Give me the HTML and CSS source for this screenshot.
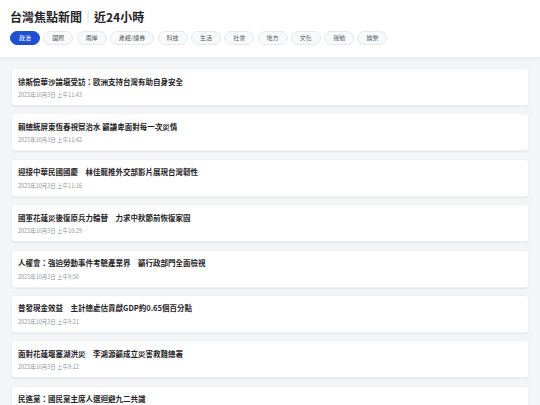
FILE: index.html
```html
<!DOCTYPE html>
<html lang="zh-Hant">
<head>
<meta charset="utf-8">
<link rel="stylesheet" href="styles.css">
</head>
<body>
<header class="header">
  <h1 class="title">台灣焦點新聞<span class="sep">｜</span>近24小時</h1>
  <nav class="chips">
    <span class="chip active">政治</span>
    <span class="chip">國際</span>
    <span class="chip">兩岸</span>
    <span class="chip">產經/證券</span>
    <span class="chip">科技</span>
    <span class="chip">生活</span>
    <span class="chip">社會</span>
    <span class="chip">地方</span>
    <span class="chip">文化</span>
    <span class="chip">運動</span>
    <span class="chip">娛樂</span>
  </nav>
</header>
<main class="list">
  <article class="card"><div class="card-title">徐斯儉華沙論壇受訪：歐洲支持台灣有助自身安全</div><div class="card-date">2025年10月3日 上午11:43</div></article>
  <article class="card"><div class="card-title">賴總統屏東恆春視察治水 籲謙卑面對每一次災情</div><div class="card-date">2025年10月3日 上午11:42</div></article>
  <article class="card"><div class="card-title">迎接中華民國國慶　林佳龍推外交部影片展現台灣韌性</div><div class="card-date">2025年10月3日 上午11:16</div></article>
  <article class="card"><div class="card-title">國軍花蓮災後復原兵力輪替　力求中秋節前恢復家園</div><div class="card-date">2025年10月3日 上午10:29</div></article>
  <article class="card"><div class="card-title">人權會：強迫勞動事件考驗產業界　籲行政部門全面檢視</div><div class="card-date">2025年10月3日 上午9:50</div></article>
  <article class="card"><div class="card-title">普發現金效益　主計總處估貢獻GDP約0.65個百分點</div><div class="card-date">2025年10月3日 上午9:21</div></article>
  <article class="card"><div class="card-title">面對花蓮堰塞湖洪災　李鴻源籲成立災害救難總署</div><div class="card-date">2025年10月3日 上午9:12</div></article>
  <article class="card"><div class="card-title">民進黨：國民黨主席人選迴避九二共識</div><div class="card-date">2025年10月3日 上午8:58</div></article>
</main>
</body>
</html>
```
FILE: styles.css
```css
* { box-sizing: border-box; }
html, body { margin: 0; padding: 0; }
body {
  background: #f4f5f7;
  font-family: "Noto Sans CJK TC", "Noto Sans", sans-serif;
  color: #1f2328;
}
.header {
  background: #ffffff;
  padding: 9px 10px 12px;
  box-shadow: 0 1px 4px rgba(0,0,0,0.06);
  border-bottom: 1px solid #eceef1;
}
.title {
  margin: 0;
  font-size: 12px;
  line-height: 16px;
  font-weight: 700;
  color: #1f2328;
}
.sep { color: #c8ccd2; font-weight: 400; }
.chips {
  display: flex;
  gap: 3.3px;
  margin-top: 6px;
}
.chip {
  display: flex;
  align-items: center;
  justify-content: center;
  height: 14px;
  padding: 0 8px;
  border-radius: 7px;
  font-size: 6px;
  line-height: 1;
  color: #555a61;
  background: #f8f9fa;
  border: 1px solid #e6e8eb;
  white-space: nowrap;
}
.chip.active {
  background: #1f4fd1;
  border-color: #1f4fd1;
  color: #ffffff;
}
.list {
  display: flex;
  flex-direction: column;
  gap: 7.4px;
  padding: 10px 11px;
}
.card {
  background: #ffffff;
  border-radius: 4px;
  box-shadow: 0 1px 2px rgba(0,0,0,0.06);
  border: 1px solid #eef0f2;
  padding: 6.5px 6px 6px;
}
.card-title {
  font-size: 7.5px;
  line-height: 11px;
  font-weight: 700;
  color: #1f2328;
}
.card-date {
  margin-top: 4.5px;
  font-size: 5.5px;
  line-height: 8px;
  color: #8f949b;
}
```
